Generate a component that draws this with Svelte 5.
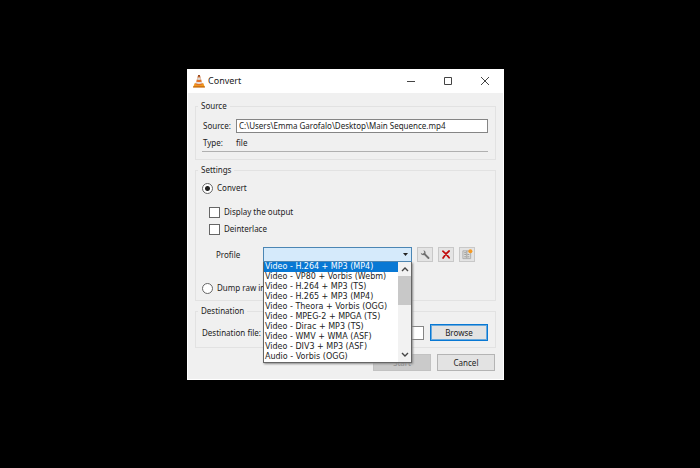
<script>
  const profiles = [
    'Video - H.264 + MP3 (MP4)',
    'Video - VP80 + Vorbis (Webm)',
    'Video - H.264 + MP3 (TS)',
    'Video - H.265 + MP3 (MP4)',
    'Video - Theora + Vorbis (OGG)',
    'Video - MPEG-2 + MPGA (TS)',
    'Video - Dirac + MP3 (TS)',
    'Video - WMV + WMA (ASF)',
    'Video - DIV3 + MP3 (ASF)',
    'Audio - Vorbis (OGG)'
  ];

  let source = $state('C:\\Users\\Emma Garofalo\\Desktop\\Main Sequence.mp4');
  let destination = $state('');
  let mode = $state('convert');
  let display = $state(false);
  let deinterlace = $state(false);
  let profile = $state('');
  let active = $state(0);
  let open = $state(true);

  function pick(i) {
    active = i;
    profile = profiles[i];
    open = false;
  }

  function toggle(e) {
    e.preventDefault();
    open = !open;
  }
</script>

<div class="desktop">
  <main class="dialog">
    <header class="titlebar">
      <svg class="cone" viewBox="0 0 12 14" aria-hidden="true">
        <path d="M1.6 9.2h8.8l1.4 4H.2z" fill="#f09a1e" />
        <path d="M.3 12.2h11.4l.3 1.4H0z" fill="#c4660f" />
        <path d="M5.2 1h1.6l2.8 9.2q-3.6 1.9-7.2 0z" fill="#e0702a" />
        <path d="M4.5 3.6h3l.6 2q-2.1.8-4.2 0z" fill="#dcd8d4" />
        <path d="M3.3 7.6q2.7 1 5.4 0l.5 1.7q-3.2 1.3-6.4 0z" fill="#e4dfda" />
        <path d="M5.2 1h1.6l.4 1.4H4.8z" fill="#8c4a28" />
      </svg>
      <h1>Convert</h1>
      <div class="window-buttons">
        <button aria-label="Minimize">
          <svg viewBox="0 0 10 10"><path d="M1 5.5h8" /></svg>
        </button>
        <button aria-label="Maximize">
          <svg viewBox="0 0 10 10"><path d="M1.5 1.5h7v7h-7z" /></svg>
        </button>
        <button aria-label="Close">
          <svg viewBox="0 0 10 10"><path d="M1 1l8 8M9 1l-8 8" /></svg>
        </button>
      </div>
    </header>

    <div class="content">
      <fieldset class="source">
        <legend>Source</legend>
        <div class="row">
          <label class="key" for="source">Source:</label>
          <input class="text" id="source" type="text" bind:value={source} />
        </div>
        <div class="row type">
          <span class="key">Type:</span>
          <span>file</span>
        </div>
        <hr />
      </fieldset>

      <fieldset class="settings">
        <legend>Settings</legend>
        <label class="option"><input type="radio" value="convert" bind:group={mode} />Convert</label>
        <div class="checks">
          <label class="option"><input type="checkbox" bind:checked={display} />Display the output</label>
          <label class="option"><input type="checkbox" bind:checked={deinterlace} />Deinterlace</label>
        </div>

        <div class="profile">
          <label for="profile">Profile</label>
          <div class="combo">
            <select id="profile" bind:value={profile} onmousedown={toggle}>
              <option value=""></option>
              {#each profiles as name}
                <option value={name}>{name}</option>
              {/each}
            </select>
            <svg class="arrow" viewBox="0 0 5 3" aria-hidden="true"><path d="M0 0h5L2.5 3z" /></svg>
            {#if open}
              <div class="popup">
                <div class="list" role="listbox" aria-label="Profile">
                  {#each profiles as name, i}
                    <button role="option" aria-selected={i === active} class:active={i === active} onclick={() => pick(i)}>{name}</button>
                  {/each}
                </div>
                <div class="scrollbar">
                  <svg viewBox="0 0 8 5"><path d="M1 4l3-3 3 3" /></svg>
                  <div class="track"><div class="thumb"></div></div>
                  <svg viewBox="0 0 8 5"><path d="M1 1l3 3 3-3" /></svg>
                </div>
              </div>
            {/if}
          </div>
          <button class="tool" aria-label="Edit selected profile">
            <svg viewBox="0 0 12 12">
              <path d="M5.2 5.2l4.6 4.6" stroke="#707070" stroke-width="2" stroke-linecap="round" />
              <path d="M4.2 1.3a2.7 2.7 0 1 1-2.9 2.9l1.8.9 1.8-.3.3-1.6z" fill="#707070" />
            </svg>
          </button>
          <button class="tool" aria-label="Delete selected profile">
            <svg viewBox="0 0 12 12">
              <path d="M2.6 2.4q3.8 3.2 6.8 7.2M9.4 2.2Q5.4 5.6 2.8 9.8" fill="none" stroke="#c20d0d" stroke-width="1.9" stroke-linecap="round" />
            </svg>
          </button>
          <button class="tool" aria-label="Create a new profile">
            <svg viewBox="0 0 12 12">
              <path d="M1.5 2h8.5v8.5H1.5z" fill="#dcdcd8" stroke="#aaa" />
              <path d="M3 4h2M3 6h2M3 8.5h2M6.5 6h2M6.5 8.5h2M5.8 2v8" stroke="#999" />
              <circle cx="9.7" cy="2.4" r="2.2" fill="#f59a23" />
            </svg>
          </button>
        </div>

        <label class="option"><input type="radio" value="dump" bind:group={mode} />Dump raw input</label>
      </fieldset>

      <fieldset class="destination">
        <legend>Destination</legend>
        <div class="row">
          <label for="destination">Destination file:</label>
          <input class="text" id="destination" type="text" bind:value={destination} />
          <button class="push focused">Browse</button>
        </div>
      </fieldset>

      <footer>
        <button class="push" disabled>Start</button>
        <button class="push">Cancel</button>
      </footer>
    </div>
  </main>
</div>

<style>
  :global(body) { margin: 0; background: #000; }

  .desktop {
    display: grid;
    grid-template-columns: 187fr minmax(300px, 317fr) 196fr;
    padding: 69px 0 24px;
    font: 8px/12px "Noto Sans", "Open Sans", sans-serif;
    color: #222;
  }
  .dialog { grid-column: 2; background: #f0f0f0; box-shadow: inset 0 0 0 1px #fff; }

  button, input, select { font: inherit; color: inherit; margin: 0; box-sizing: border-box; }
  svg { display: block; }

  .titlebar { display: flex; align-items: center; height: 24px; padding-left: 6px; background: #fff; }
  .cone { width: 12px; height: 14px; }
  h1 { margin: 0 auto 0 3px; font-size: 9px; font-weight: 400; line-height: 12px; }
  .window-buttons { display: flex; }
  .window-buttons button { width: 37px; height: 24px; padding: 0 13px; border: 0; background: none; }
  .window-buttons svg { width: 10px; height: 10px; fill: none; stroke: #444; }

  .content { padding: 7px 8px 9px; }
  fieldset { min-width: 0; margin: 0; border: 1px solid #e2e2e2; box-sizing: border-box; }
  legend { padding: 0 3px; }
  .row { display: flex; align-items: center; }
  .text { flex: 1; min-width: 0; height: 14px; padding: 0 2px 1px; border: 1px solid #858585; border-radius: 0; background: #fff; }

  .source { padding: 7px 7px 7px 2px; }
  .source .key { width: 33px; padding-left: 5px; }
  .type { height: 16px; margin-top: 2px; }
  hr { margin: 0 0 0 4px; border: 0; border-top: 1px solid #b0b0b0; }

  .settings { margin-top: 4px; padding: 6px 20px 6px 2px; }
  .option { display: flex; align-items: center; gap: 4px; height: 12px; padding-left: 4px; }
  .option input { appearance: none; width: 11px; height: 11px; border: 1px solid #666; background: #fff; }
  .option input[type='radio'] { border-radius: 50%; }
  .option input[type='radio']:checked { background: radial-gradient(circle, #222 0 2px, #fff 3px); }
  .option input[type='checkbox']:checked { background: #222; box-shadow: inset 0 0 0 2px #fff; }
  .checks { display: grid; gap: 5px; margin-top: 12px; padding-left: 7px; }

  .profile { display: flex; align-items: center; gap: 5px; margin: 12px 0 20px; padding-left: 18px; }
  .profile label { width: 42px; }
  .combo { position: relative; flex: 1; min-width: 0; }
  select {
    display: block;
    width: 100%;
    height: 15px;
    padding: 0 10px 0 2px;
    border: 1px solid #4b86b4;
    border-radius: 0;
    appearance: none;
    background: #d5eafb;
  }
  .arrow { position: absolute; top: 6px; right: 4px; width: 5px; height: 3px; fill: #222; pointer-events: none; }
  .popup {
    position: absolute;
    z-index: 1;
    top: 100%;
    left: 0;
    right: 0;
    display: flex;
    border: 1px solid #666;
    border-top: 0;
    background: #fff;
    box-shadow: 1px 1px 2px #888;
  }
  .list { flex: 1; min-width: 0; font-family: "DejaVu Sans", sans-serif; }
  .list button {
    display: block;
    width: 100%;
    height: 10px;
    padding: 0 1px;
    border: 0;
    background: none;
    line-height: 10px;
    text-align: left;
    white-space: nowrap;
  }
  .list .active { background: #0878d4; color: #fff; }
  .scrollbar { display: flex; flex-direction: column; align-items: center; gap: 4px; width: 13px; padding: 5px 0; box-sizing: border-box; background: #f2f2f2; }
  .scrollbar svg { width: 8px; height: 5px; fill: none; stroke: #444; stroke-width: 1.4; }
  .track { flex: 1; align-self: stretch; }
  .thumb { height: 40%; background: #c8c8c8; }

  .tool { width: 16px; height: 15px; padding: 1px; border: 1px solid #c8c8c8; background: #e4e4e4; }
  .tool svg { width: 12px; height: 11px; }

  .destination { margin-top: 4px; padding: 7px 7px 6px 2px; }
  .destination .row { padding-left: 4px; }
  .destination .text { margin: 0 6px 0 3px; }
  .push { width: 58px; height: 17px; padding: 0; border: 1px solid #b4b4b4; background: #e3e3e3; }
  .push.focused { border: 1px solid #0878d4; box-shadow: inset 0 0 0 1px #69a9dc; }
  .push:disabled { border-color: #c2c2c2; background: #cacaca; color: #8c8c8c; }
  footer { display: flex; justify-content: flex-end; gap: 6px; margin-top: 6px; padding-right: 1px; }
</style>
